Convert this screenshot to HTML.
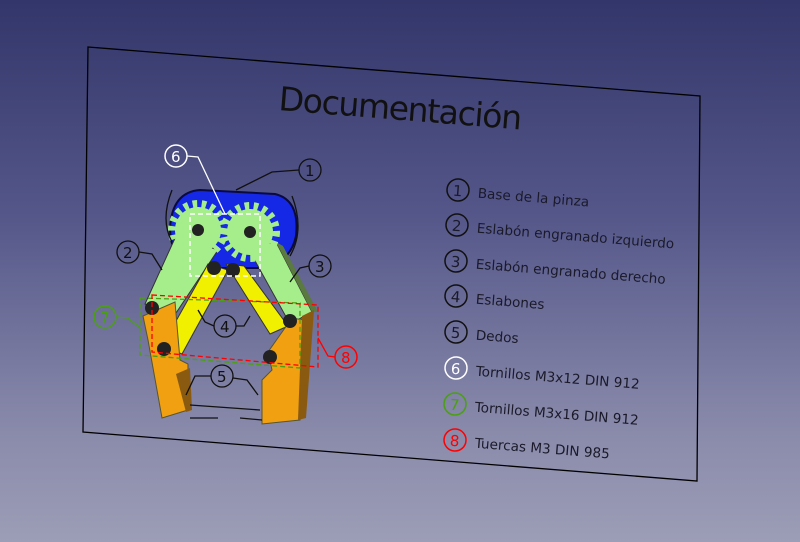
<!DOCTYPE html>
<html><head><meta charset="utf-8"><style>
html,body{margin:0;padding:0}
body{width:800px;height:542px;overflow:hidden;background:linear-gradient(#33366a 0%,#55578a 40%,#8a8bab 80%,#9c9db6 100%)}
svg{display:block}
text{font-family:"DejaVu Sans","Liberation Sans",sans-serif}
</style></head><body>
<svg width="800" height="542" viewBox="0 0 800 542" xmlns="http://www.w3.org/2000/svg">
<polygon points="88,47 700,96 697,481 83,432" fill="none" stroke="#000" stroke-width="1.3"/>
<text x="278" y="110" font-size="33" fill="#111" transform="rotate(4.6 278 110)" textLength="244">Documentación</text>

<g font-size="13.6" fill="#1a1a2a" stroke-width="1.5">
<g transform="rotate(4.6 458 190)"><circle cx="458" cy="190" r="11" fill="none" stroke="#111"/><text x="453" y="196" font-size="15">1</text><text x="478" y="196">Base de la pinza</text></g>
<g transform="rotate(4.6 457 225)"><circle cx="457" cy="225" r="11" fill="none" stroke="#111"/><text x="452" y="231" font-size="15">2</text><text x="477" y="231">Eslabón engranado izquierdo</text></g>
<g transform="rotate(4.6 456 261)"><circle cx="456" cy="261" r="11" fill="none" stroke="#111"/><text x="451" y="267" font-size="15">3</text><text x="476" y="267">Eslabón engranado derecho</text></g>
<g transform="rotate(4.6 456 296)"><circle cx="456" cy="296" r="11" fill="none" stroke="#111"/><text x="451" y="302" font-size="15">4</text><text x="476" y="302">Eslabones</text></g>
<g transform="rotate(4.6 456 332)"><circle cx="456" cy="332" r="11" fill="none" stroke="#111"/><text x="451" y="338" font-size="15">5</text><text x="476" y="338">Dedos</text></g>
<g transform="rotate(4.6 456 368)"><circle cx="456" cy="368" r="11" fill="none" stroke="#fff"/><text x="451" y="374" font-size="15" fill="#fff">6</text><text x="476" y="374">Tornillos M3x12 DIN 912</text></g>
<g transform="rotate(4.6 455 404)"><circle cx="455" cy="404" r="11" fill="none" stroke="#4aa010"/><text x="450" y="410" font-size="15" fill="#4aa010">7</text><text x="475" y="410">Tornillos M3x16 DIN 912</text></g>
<g transform="rotate(4.6 455 440)"><circle cx="455" cy="440" r="11" fill="none" stroke="#f00"/><text x="450" y="446" font-size="15" fill="#f00">8</text><text x="475" y="446">Tuercas M3 DIN 985</text></g>
</g>

<!-- base -->
<path d="M200,190 L275,194 Q300,200 296,236 Q290,265 258,268 L195,268 Q170,258 170,228 Q172,192 200,190Z" fill="#1428e6" stroke="#0a0a40" stroke-width="2"/>
<!-- left green arm -->
<polygon points="176,236 218,250 174,316 145,304" fill="#a6ee8c" stroke="#333" stroke-width="1"/>
<!-- right green arm -->
<polygon points="248,248 276,242 312,312 290,324" fill="#a6ee8c" stroke="#333" stroke-width="1"/>
<polygon points="276,242 283,246 318,312 312,312" fill="#5a7a40"/>
<!-- gears -->
<circle cx="198" cy="230" r="23" fill="#a6ee8c"/>
<circle cx="198" cy="230" r="26" fill="none" stroke="#a6ee8c" stroke-width="8" stroke-dasharray="4.5 4.5"/>
<circle cx="250" cy="232" r="23" fill="#a6ee8c"/>
<circle cx="250" cy="232" r="26" fill="none" stroke="#a6ee8c" stroke-width="8" stroke-dasharray="4.5 4.5"/>
<circle cx="198" cy="230" r="6" fill="#222"/><circle cx="250" cy="232" r="6" fill="#222"/>
<!-- yellow links -->
<polygon points="208,264 228,270 182,354 162,346" fill="#f0f000" stroke="#333" stroke-width="1"/>
<polygon points="226,264 244,266 288,326 270,334" fill="#f0f000" stroke="#333" stroke-width="1"/>
<!-- fingers -->
<polygon points="143,316 175,302 180,360 188,364 188,372 178,374 188,410 162,418 148,340" fill="#f0a010" stroke="#553" stroke-width="1"/>
<polygon points="176,374 190,368 192,410 186,412" fill="#8a5a10"/>
<polygon points="262,380 272,370 268,352 292,318 304,320 300,420 262,424" fill="#f0a010" stroke="#553" stroke-width="1"/>
<polygon points="302,316 314,310 306,418 298,420" fill="#8a5a10"/>
<!-- screws -->
<g fill="#222"><circle cx="152" cy="308" r="7"/><circle cx="164" cy="349" r="7"/><circle cx="214" cy="268" r="7"/><circle cx="233" cy="270" r="7"/><circle cx="290" cy="321" r="7"/><circle cx="270" cy="357" r="7"/></g>
<!-- dashed boxes -->
<rect x="190" y="214" width="70" height="62" fill="none" stroke="#fff" stroke-width="1.5" stroke-dasharray="5 3"/>
<polygon points="140,298 300,303 300,368 140,355" fill="none" stroke="#4aa010" stroke-width="1.3" stroke-dasharray="5 3"/>
<polygon points="152,295 318,305 318,367 152,352" fill="none" stroke="#f00" stroke-width="1.3" stroke-dasharray="5 3"/>
<!-- callouts -->
<g fill="none" stroke="#111" stroke-width="1.3">
<circle cx="310" cy="170" r="11"/><path d="M299,170 L272,172 L236,190"/>
<circle cx="128" cy="252" r="11"/><path d="M139,252 L152,254 L162,270"/>
<circle cx="320" cy="266" r="11"/><path d="M309,266 L300,268 L290,282"/>
<circle cx="225" cy="326" r="11"/><path d="M214,326 L205,322 L198,310 M236,326 L244,326 L250,316"/>
<circle cx="222" cy="376" r="11"/><path d="M211,376 L195,376 L186,395 M233,378 L247,380 L258,395"/>
<path d="M172,190 Q160,220 172,242 M292,196 Q305,230 290,256"/>
<path d="M190,405 L260,410 M190,418 L218,418 M240,418 L262,420"/>
</g>
<circle cx="176" cy="156" r="11" fill="none" stroke="#fff" stroke-width="1.5"/><text x="171" y="162" font-size="15" fill="#fff">6</text>
<path d="M187,156 L198,157 L225,214" stroke="#fff" stroke-width="1.3" fill="none"/>
<circle cx="105" cy="317" r="11" fill="none" stroke="#4aa010" stroke-width="1.5"/><text x="100" y="323" font-size="15" fill="#4aa010">7</text>
<path d="M116,317 L128,318 L140,328" stroke="#4aa010" stroke-width="1.3" fill="none"/>
<circle cx="346" cy="357" r="11" fill="none" stroke="#f00" stroke-width="1.5"/><text x="341" y="363" font-size="15" fill="#f00">8</text>
<path d="M335,357 L328,356 L318,338" stroke="#f00" stroke-width="1.3" fill="none"/>
<g font-size="15" fill="#111"><text x="305" y="176">1</text><text x="123" y="258">2</text><text x="315" y="272">3</text><text x="220" y="332">4</text><text x="217" y="382">5</text></g>
</svg>
</body></html>
